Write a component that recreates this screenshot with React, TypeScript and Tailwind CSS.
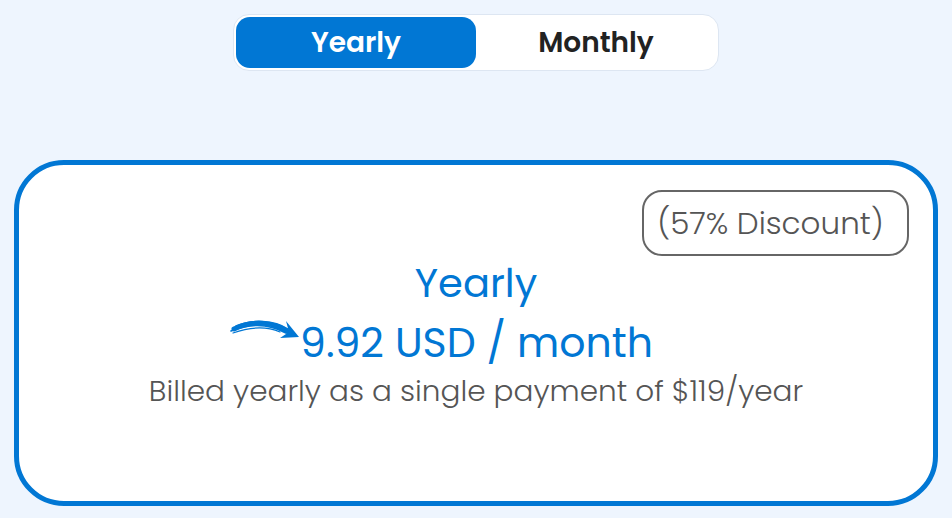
import React, { useState } from 'react'

const font = { fontFamily: 'Poppins, Inter, "Noto Sans", sans-serif' }

// brush-style arrow pointing at the price
const Arrow = () => (
    <svg width="70" height="26" viewBox="0 0 70 26" className="shrink-0">
        <g stroke="#0177d4" fill="none" strokeLinecap="round">
            <path d="M4 13 C 20 5, 42 4, 60 17" strokeWidth="5" />
            <path d="M1 15 C 18 8, 38 7, 56 17" strokeWidth="1.6" />
            <path d="M6 10 C 22 3, 44 4, 58 13" strokeWidth="1.4" />
            <path d="M3 17 C 20 11, 36 10, 50 16" strokeWidth="1.2" />
        </g>
        <path d="M56 5 L 69 21 L 50 22 L 59 16 Z" fill="#0177d4" />
    </svg>
)

const App = () => {
    const [plan, setPlan] = useState<'yearly' | 'monthly'>('yearly')

    return (
        <div className="w-[952px] h-[518px] bg-[#eef5fe] overflow-hidden" style={font}>
            <div className="flex justify-center pt-[14px]">
                <div className="flex w-[486px] h-[57px] p-[2px] rounded-[16px] bg-white border border-[#dde6f2]">
                    <button
                        onClick={() => setPlan('yearly')}
                        className={`flex-1 rounded-[14px] text-[28px] font-semibold ${plan === 'yearly' ? 'bg-[#0177d4] text-white' : 'text-[#222]'}`}
                    >
                        Yearly
                    </button>
                    <button
                        onClick={() => setPlan('monthly')}
                        className={`flex-1 rounded-[14px] text-[28px] font-semibold ${plan === 'monthly' ? 'bg-[#0177d4] text-white' : 'text-[#222]'}`}
                    >
                        Monthly
                    </button>
                </div>
            </div>

            <div className="mx-[14px] mt-[89px] h-[346px] rounded-[50px] border-[5px] border-[#0177d4] bg-white pt-[25px] pr-[24px]">
                <div className="flex justify-end">
                    <div className="w-[267px] h-[66px] pr-[10px] flex items-center justify-center rounded-[20px] border-2 border-[#666] text-[31px] font-light text-[#555]">
                        (57% Discount)
                    </div>
                </div>
                <div className="flex flex-col items-center pl-[24px]">
                    <div className="mt-[3px] text-[40px] leading-[48px] text-[#0177d4]">Yearly</div>
                    <div className="flex items-start mt-[6px]">
                        <div className="mt-[3px] ml-[-69px]"><Arrow /></div>
                        <div className="text-[41px] leading-[60px] text-[#0177d4]">9.92 USD / month</div>
                    </div>
                    <div className="text-[29.5px] leading-[36px] font-light text-[#555]">
                        Billed yearly as a single payment of $119/year
                    </div>
                </div>
            </div>
        </div>
    )
}

export default App
